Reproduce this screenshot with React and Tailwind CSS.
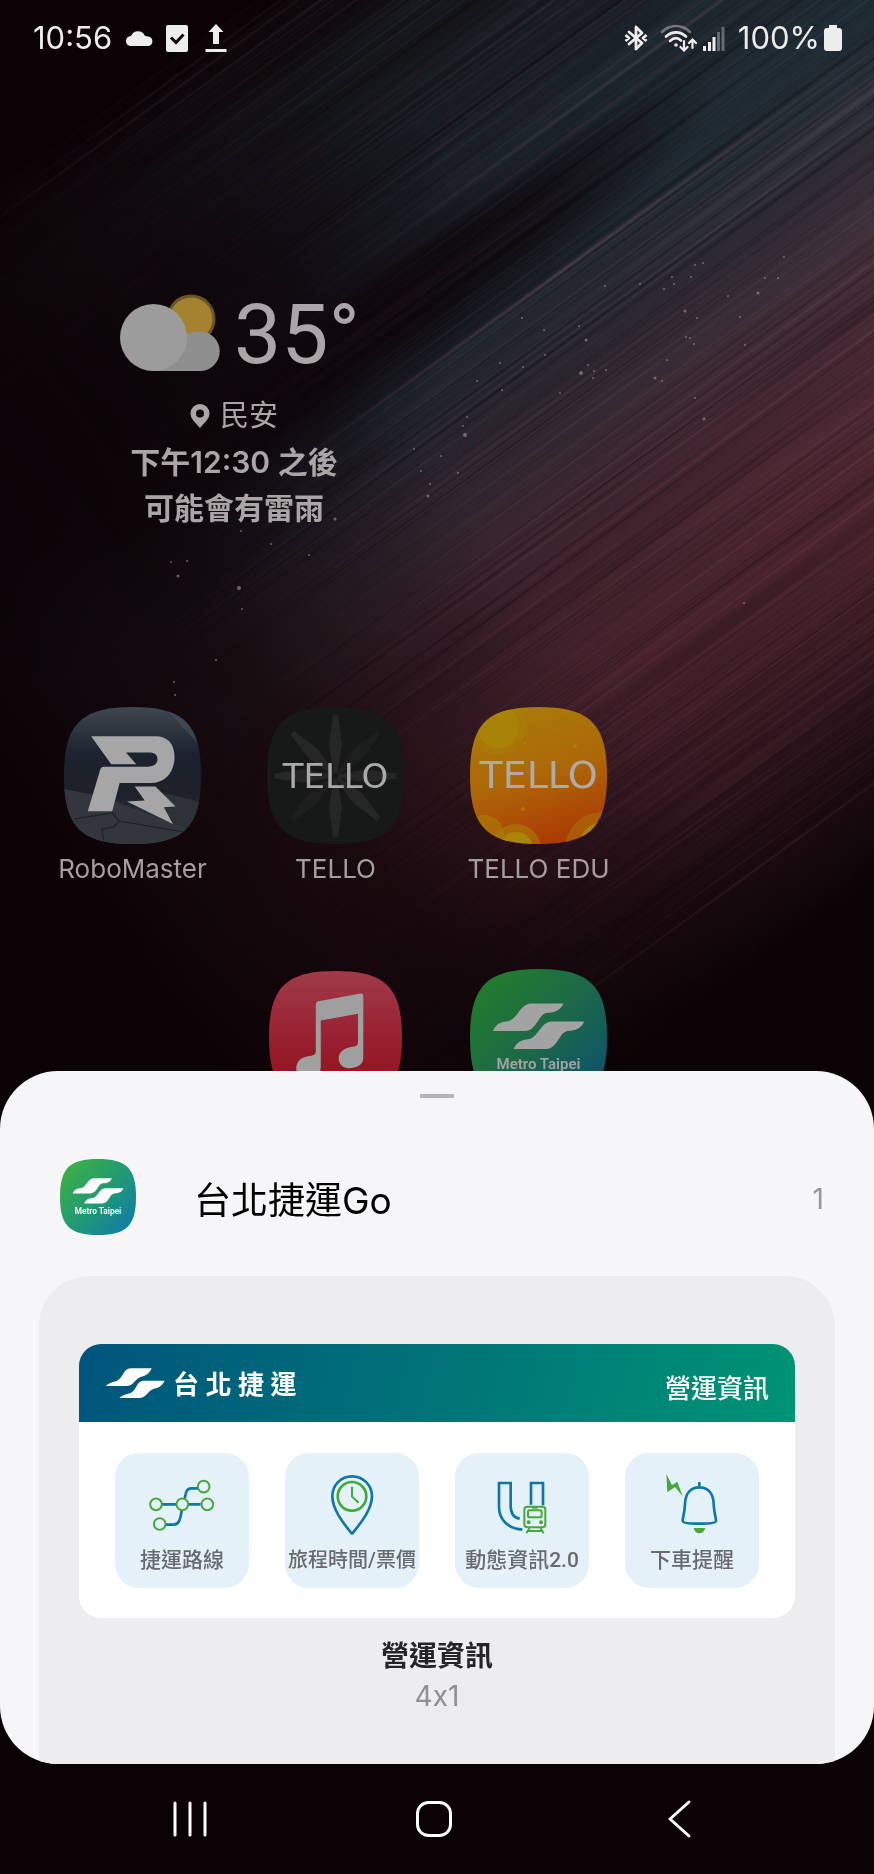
import { useId } from 'react';

const SQUIRCLE = 'M68.5 0C120 0 137 17 137 68.5S120 137 68.5 137 0 120 0 68.5 17 0 68.5 0Z';

// small seeded generator so the streaks are the same on every render
function makeRandom(seed) {
  let s = seed;
  return () => {
    s = (s * 16807) % 2147483647;
    return s / 2147483647;
  };
}

function makeStreaks() {
  const rand = makeRandom(4711);
  const streaks = [];
  for (let i = 0; i < 760; i++) {
    const v = 150 + rand() * 1000;
    const length = 350 + rand() * 900;
    const u = -560 + rand() * 900;
    const dark = rand() < 0.45;
    const wide = rand() > 0.9;
    let tone = 'rose';
    if (v < 560) tone = rand() < 0.2 ? 'rose' : 'teal';
    else if (v < 740) tone = 'pale';
    streaks.push({
      u,
      v,
      length,
      height: wide ? 4 + rand() * 12 : 1 + rand(),
      fill: dark ? 'dark' : tone,
      opacity: (dark ? 0.08 + rand() * 0.24 : 0.04 + rand() * 0.15) * (wide ? 0.6 : 1),
    });
  }
  return streaks;
}

const STREAKS = makeStreaks();

const SPARKS = [
  [605, 286, 1], [640, 284, 1], [672, 277, 1], [695, 265, 1], [703, 263, 1], [691, 277, 1],
  [674, 284, 1], [664, 289, 1], [784, 257, 1], [778, 278, 1], [765, 278, 1], [758, 293, 1.5],
  [728, 296, 1], [740, 317, 1], [685, 311, 1.5], [697, 318, 1], [686, 337, 1], [690, 338, 1],
  [694, 344, 1], [667, 360, 1], [655, 378, 1.5], [662, 381, 1], [745, 345, 1], [704, 419, 1.5],
  [695, 398, 1], [522, 318, 1], [544, 330, 1], [579, 326, 1], [586, 340, 1.5], [545, 355, 1],
  [523, 367, 1], [500, 363, 1], [477, 381, 1], [502, 390, 1], [560, 393, 1], [581, 373, 2],
  [588, 365, 1], [594, 371, 1], [606, 370, 1], [593, 378, 1], [467, 417, 1], [463, 426, 1],
  [465, 435, 2], [414, 449, 1], [421, 471, 1], [430, 484, 1], [428, 496, 1.5], [458, 473, 1],
  [441, 456, 1], [335, 519, 1.5], [241, 531, 1], [271, 544, 1], [309, 555, 1], [171, 562, 1],
  [187, 561, 1], [178, 576, 1.5], [239, 588, 2], [242, 609, 1], [216, 660, 1], [174, 682, 1],
  [175, 695, 1], [744, 603, 1],
];

function Wallpaper() {
  return (
    <svg
      className="absolute inset-x-0 top-0 w-full"
      viewBox="0 0 874 1110"
      preserveAspectRatio="xMidYMin slice"
      aria-hidden="true"
    >
      <defs>
        <linearGradient id="bands" gradientUnits="userSpaceOnUse" x1="0" y1="150" x2="0" y2="1230">
          <stop offset="0" stopColor="#0b0205" />
          <stop offset=".1" stopColor="#15171b" />
          <stop offset=".22" stopColor="#1c222a" />
          <stop offset=".35" stopColor="#1f2c35" />
          <stop offset=".43" stopColor="#2c2c36" />
          <stop offset=".51" stopColor="#41303a" />
          <stop offset=".6" stopColor="#4b2a36" />
          <stop offset=".7" stopColor="#532935" />
          <stop offset=".79" stopColor="#421e29" />
          <stop offset=".88" stopColor="#27121a" />
          <stop offset="1" stopColor="#0b0205" />
        </linearGradient>
        <linearGradient id="fade" gradientUnits="userSpaceOnUse" x1="-480" y1="0" x2="640" y2="0">
          <stop offset="0" stopColor="#fff" stopOpacity="0" />
          <stop offset=".25" stopColor="#fff" stopOpacity=".22" />
          <stop offset=".5" stopColor="#fff" stopOpacity=".78" />
          <stop offset="1" stopColor="#fff" stopOpacity="1" />
        </linearGradient>
        <mask id="reach" maskUnits="userSpaceOnUse" x="-900" y="0" width="1900" height="1500">
          <rect x="-900" width="1900" height="1500" fill="url(#fade)" />
        </mask>
        {[['rose', '#a2606e'], ['teal', '#4b6772'], ['pale', '#8b7480'], ['dark', '#0b0205']].map(([id, color]) => (
          <linearGradient id={id} key={id}>
            <stop offset="0" stopColor={color} stopOpacity="0" />
            <stop offset=".5" stopColor={color} />
            <stop offset="1" stopColor={color} stopOpacity="0" />
          </linearGradient>
        ))}
        <radialGradient id="hollow">
          <stop offset="0" stopColor="#0c060a" stopOpacity=".9" />
          <stop offset=".5" stopColor="#0c060a" stopOpacity=".7" />
          <stop offset="1" stopColor="#0c060a" stopOpacity="0" />
        </radialGradient>
      </defs>
      <g transform="rotate(-36)">
        <g mask="url(#reach)">
          <rect x="-900" y="150" width="1900" height="1080" fill="url(#bands)" />
          <ellipse cx="150" cy="490" rx="380" ry="65" fill="url(#hollow)" />
          {STREAKS.map((s, i) => (
            <rect key={i} x={s.u} y={s.v} width={s.length} height={s.height} fill={`url(#${s.fill})`} opacity={s.opacity} />
          ))}
          <ellipse cx="-130" cy="400" rx="400" ry="220" fill="url(#hollow)" />
          <rect x="-100" y="548" width="800" height="3" fill="url(#rose)" opacity=".35" />
        </g>
      </g>
      {SPARKS.map(([x, y, r]) => (
        <circle key={`${x}-${y}`} cx={x} cy={y} r={r} fill="#b08f98" opacity=".6" />
      ))}
    </svg>
  );
}

function StatusBar() {
  return (
    <header className="flex h-[76px] items-center justify-between pl-[33px] pr-8 font-[Inter,sans-serif] text-[31px] text-[#ededed]">
      <div className="flex items-center gap-[13px]">
        <time>10:56</time>
        <svg className="h-4 w-7" viewBox="0 0 28 16" fill="currentColor">
          <path d="M5 16A5 5 0 0 1 4 6.500 4 4 0 0 1 6 6 7.500 7.500 0 0 1 20 6 5 5 0 0 1 23 6.500 4.800 4.800 0 0 1 23.500 16Z" />
        </svg>
        <svg className="h-7 w-[22px]" viewBox="0 0 22 28">
          <rect y="1" width="22" height="27" rx="2" fill="currentColor" />
          <path d="M5 13.500l5 5 7.500-8" fill="none" stroke="#12080b" strokeWidth="3" />
        </svg>
        <svg className="ml-1 h-7 w-[22px]" viewBox="0 0 22 28" fill="currentColor">
          <path d="M11 0L18.500 8H14V20H8V8H3.500ZM.5 25H21.500V28H.5Z" />
        </svg>
      </div>
      <div className="flex items-center">
        <svg className="mr-3 h-7 w-6" viewBox="0 0 24 28" fill="none" stroke="currentColor" strokeWidth="2.800" strokeLinejoin="round">
          <path d="M5 8L18 19 12 25V3L18 9 5 20" strokeLinecap="round" />
          <path d="M1.500 11L5 14 1.500 17M22.500 11L19 14 22.500 17" />
        </svg>
        <svg className="mr-1 h-7 w-[38px]" viewBox="0 0 38 28" fill="none" stroke="currentColor" strokeWidth="2.600" strokeLinecap="round">
          <path d="M2 8C10 0 22 0 30 8" opacity=".4" />
          <path d="M6 12.500C12 7 20 7 26 12.500M10 17C14 13.500 18 13.500 21 16.500" />
          <circle cx="16" cy="21" r="1.800" fill="currentColor" stroke="none" />
          <path d="M24 17V26M20.500 23L24 26.500 27.500 23M32.500 24V16M29 19L32.500 15.500 36 19" strokeWidth="2.200" />
        </svg>
        <svg className="mr-3 h-7 w-6" viewBox="0 0 24 28" fill="currentColor">
          <path d="M1 22H4V27H1ZM6 18H9V27H6ZM10.500 13H13.500V27H10.500Z" />
          <path d="M15 8H18V27H15ZM19.500 3H22.500V27H19.500Z" opacity=".35" />
        </svg>
        <span>100%</span>
        <svg className="ml-1 h-7 w-[18px]" viewBox="0 0 18 28" fill="currentColor">
          <path d="M5 1H13V4H15Q18 4 18 7V24Q18 27 15 27H3Q0 27 0 24V7Q0 4 3 4H5Z" />
        </svg>
      </div>
    </header>
  );
}

function Weather() {
  return (
    <section className="col-span-2 flex flex-col items-center text-[#aaa5a7]">
      <div className="flex items-center gap-3.5 pl-3">
        <svg className="h-[78px] w-[100px]" viewBox="0 0 100 78">
          <circle cx="71" cy="25" r="24.500" fill="#6b5425" />
          <circle cx="71" cy="25" r="21.500" fill="#a58230" />
          <path d="M33 77V60L66 40Q72 37.500 80 37.500A19.700 19.700 0 0 1 80 77Z" fill="#8e8e8f" />
          <circle cx="33.500" cy="43.500" r="33.500" fill="#9c9c9d" />
        </svg>
        <span className="pt-1 text-[84px] leading-[84px]">35°</span>
      </div>
      <div className="mt-4 text-center font-[Inter,'Noto_Sans_CJK_TC',sans-serif] text-[30px] leading-[46px] font-semibold">
        <p className="flex items-center justify-center gap-2.5 text-[29px] font-normal">
          <svg className="h-6 w-5" viewBox="0 0 20 24" fill="currentColor">
            <path fillRule="evenodd" d="M10 0A9.500 9.500 0 0 1 19.500 9.500C19.500 15 14 19 10 24 6 19 .5 15 .5 9.500A9.500 9.500 0 0 1 10 0ZM10 5.500A4 4 0 1 0 10 13.500 4 4 0 1 0 10 5.500Z" />
          </svg>
          民安
        </p>
        <p>下午12:30 之後</p>
        <p>可能會有雷雨</p>
      </div>
    </section>
  );
}

function RoboMasterIcon() {
  return (
    <svg className="size-[137px]" viewBox="0 0 137 137" aria-hidden="true">
      <defs>
        <linearGradient id="robo" x1="0" y1="0" x2="0" y2="1">
          <stop offset="0" stopColor="#40464f" />
          <stop offset=".35" stopColor="#1c222e" />
          <stop offset=".65" stopColor="#1d2129" />
          <stop offset="1" stopColor="#41464d" />
        </linearGradient>
        <clipPath id="robo-clip"><path d={SQUIRCLE} /></clipPath>
      </defs>
      <g clipPath="url(#robo-clip)">
        <rect width="137" height="137" fill="url(#robo)" />
        <path d="M0 82L40 90 137 128V137H0Z" fill="#32373e" />
        <path d="M92 84L137 95V128L100 112Z" fill="#2d3239" />
        <path d="M10 112L48 106 55 114 50 120 38 122 40 137M55 114L137 128" fill="none" stroke="#1d2026" strokeWidth="1.200" />
        <path d="M100 0L137 40V30L110 0Z" fill="#4a4f58" opacity=".6" />
      </g>
      <g transform="scale(.335) translate(-72 -51)" fill="#a6a6a6">
        <path d="M153 138H345C382 138 402 162 402 200 402 246 374 278 330 278H238L216 362H143L180 238Q182 229 192 229H322C342 229 351 219 351 207 351 194 343 187 325 187H257L288 222H213Z" />
        <path d="M283 288H345L405 348 370 350 397 400 260 333 313 330Z" />
      </g>
    </svg>
  );
}

function TelloIcon() {
  return (
    <svg className="size-[137px]" viewBox="0 0 137 137">
      <path d={SQUIRCLE} fill="#171818" />
      {[0, 45, 90, 135, 180, 225, 270, 315].map((angle) => (
        <path
          key={angle}
          d="M66 8H71L75 38 70 66H67L62 38Z"
          fill={angle === 45 || angle === 225 ? '#1e1e1e' : '#262626'}
          transform={`rotate(${angle} 68.500 69)`}
        />
      ))}
      <text x="68.500" y="81" textAnchor="middle" fontSize="34" fontFamily="DejaVu Sans, sans-serif" fill="#aaa">TELLO</text>
    </svg>
  );
}

function TelloEduIcon() {
  return (
    <svg className="size-[137px]" viewBox="0 0 137 137">
      <defs>
        <linearGradient id="edu" x1=".3" y1="0" x2=".6" y2="1">
          <stop offset="0" stopColor="#a87c08" />
          <stop offset=".5" stopColor="#ad6808" />
          <stop offset="1" stopColor="#ac3a04" />
        </linearGradient>
        <clipPath id="edu-clip"><path d={SQUIRCLE} /></clipPath>
      </defs>
      <g clipPath="url(#edu-clip)">
        <rect width="137" height="137" fill="url(#edu)" />
        <g fill="#a98608">
          <circle cx="28" cy="20" r="28" opacity=".25" />
          <circle cx="28" cy="20" r="21" opacity=".7" />
          <circle cx="14" cy="128" r="20" opacity=".5" />
          <circle cx="46" cy="142" r="25" opacity=".5" />
          <circle cx="46" cy="142" r="17" />
          <circle cx="132" cy="142" r="37" opacity=".4" />
          <circle cx="136" cy="142" r="28" />
          <circle cx="53" cy="102" r="2" opacity=".7" />
          <circle cx="55" cy="36" r="1.500" opacity=".7" />
          <circle cx="105" cy="39" r="2" opacity=".7" />
        </g>
      </g>
      <text x="68.500" y="81" textAnchor="middle" fontSize="38" fontFamily="DejaVu Sans, sans-serif" fill="#b0aaa6">TELLO</text>
    </svg>
  );
}

function MusicIcon() {
  return (
    <svg className="size-[133px]" viewBox="0 0 137 137" aria-label="Music">
      <defs>
        <linearGradient id="music" x1="0" y1="0" x2="0" y2="1">
          <stop offset="0" stopColor="#a03a49" />
          <stop offset=".8" stopColor="#941321" />
        </linearGradient>
      </defs>
      <path d={SQUIRCLE} fill="url(#music)" />
      <path
        transform="scale(.342) translate(-87 -63)"
        fill="#9f9f9f"
        d="M228 163Q228 156 236 154L362 131Q371 130 371 140V325C371 345 350 356 328 356 310 356 297 345 297 326 297 305 315 296 335 292Q355 290 355 280V192L243 212V352C243 372 225 384 205 384 185 384 169 374 169 357 169 335 185 322 205 320Q228 317 228 306Z"
      />
    </svg>
  );
}

function MetroIcon({ className, dim = false }) {
  const id = useId();
  const colors = dim ? ['#237d2c', '#1c6848', '#0c5070'] : ['#3eb044', '#219a72', '#0e7bab'];
  const ink = dim ? '#a3a3a3' : '#fff';

  return (
    <svg className={className} viewBox="0 0 137 137" aria-label="Metro Taipei">
      <defs>
        <linearGradient id={id} x1=".05" y1=".1" x2=".95" y2=".95">
          <stop offset="0" stopColor={colors[0]} />
          <stop offset=".5" stopColor={colors[1]} />
          <stop offset="1" stopColor={colors[2]} />
        </linearGradient>
      </defs>
      <path d={SQUIRCLE} fill={`url(#${id})`} />
      <g transform="scale(.335) translate(-151 -837)" fill={ink}>
        <path d="M219 1022C230 1000 243 995 264 993 292 988 300 942 332 940H430C420 962 405 967 380 968 354 972 352 1020 316 1022Z" />
        <path d="M281 1076C292 1054 305 1049 326 1047 354 1042 362 996 394 994H492C482 1016 467 1021 442 1022 416 1026 414 1074 378 1076Z" />
      </g>
      <text x="68.500" y="100" textAnchor="middle" fontSize="15" fontWeight="600" fill={ink}>Metro Taipei</text>
    </svg>
  );
}

function AppShortcut({ icon, label }) {
  return (
    <button type="button" className="flex flex-col items-center gap-[9px]">
      {icon}
      <span className="font-[Inter,sans-serif] text-[26px] leading-8 whitespace-nowrap text-[#a59fa1]">{label}</span>
    </button>
  );
}

function RouteIcon() {
  return (
    <svg className="h-[63px] w-[68px]" viewBox="236 430 204 189" fill="none" strokeWidth="8">
      <path d="M278 521H320M357 521H394M346 504C350 484 352 473 366 473H386M337 540C333 566 329 582 314 582H290" stroke="#0e76a8" />
      <g stroke="#46a83a" strokeWidth="6">
        <circle cx="260" cy="521" r="17.500" />
        <circle cx="339" cy="521" r="17.500" />
        <circle cx="414" cy="521" r="17.500" />
        <circle cx="403" cy="468" r="17.500" />
        <circle cx="271" cy="580" r="17.500" />
      </g>
    </svg>
  );
}

function PinClockIcon() {
  return (
    <svg className="h-[63px] w-[68px]" viewBox="745 430 204 189" fill="none" strokeWidth="8">
      <path d="M847 437C880 437 907 463 907 497 907 535 875 575 850 606Q847 610 844 606C819 575 788 535 788 497 788 463 814 437 847 437Z" stroke="#0e76a8" />
      <circle cx="847" cy="497" r="43" stroke="#46a83a" />
      <path d="M847 468V498L867 516" stroke="#46a83a" strokeWidth="6" />
    </svg>
  );
}

function TrainIcon() {
  return (
    <svg className="h-[63px] w-[68px]" viewBox="175 430 204 189" fill="none" strokeWidth="8">
      <path d="M278 597C236 594 208 567 208 530V457H243V525C243 548 252 561 270 564M304 522V457H340V524" stroke="#0e76a8" />
      <g stroke="#46a83a" strokeWidth="6">
        <rect x="284" y="528" width="63" height="62" rx="9" />
        <rect x="295" y="539" width="41" height="21" rx="5" />
        <path d="M290 608L300 592M342 608L332 592M292 601H340M308 531H324" />
        <circle cx="297" cy="575" r="3" fill="#46a83a" />
        <circle cx="334" cy="575" r="3" fill="#46a83a" />
      </g>
    </svg>
  );
}

function BellIcon() {
  return (
    <svg className="h-[63px] w-[68px]" viewBox="683 430 204 189">
      <path d="M708 430L725 464 741 453 757 497 734 469 711 485Z" fill="#46a83a" />
      <path d="M807 457V470M807 470C834 470 849 490 850 520 851 548 857 560 857 570Q857 579 807 579 757 579 757 570C757 560 763 548 764 520 765 490 780 470 807 470Z" fill="none" stroke="#0e76a8" strokeWidth="8" strokeLinecap="round" />
      <path d="M790 592H825Q820 608 807 608 794 608 790 592Z" fill="#46a83a" />
    </svg>
  );
}

const services = [
  { label: '捷運路線', icon: <RouteIcon />, size: 'text-[21px]' },
  { label: '旅程時間/票價', icon: <PinClockIcon />, size: 'text-[20px]' },
  { label: '動態資訊2.0', icon: <TrainIcon />, size: 'text-[21px]' },
  { label: '下車提醒', icon: <BellIcon />, size: 'text-[21px]' },
];

function MetroWidget() {
  return (
    <article className="overflow-hidden rounded-[22px] bg-white">
      <header className="flex h-[78px] items-center justify-between bg-linear-[105deg] from-[#00547c] to-[#009474] px-[26px] text-white">
        <div className="flex items-center gap-2">
          <svg className="h-8 w-[60px]" viewBox="105 108 180 96" fill="#fff" aria-hidden="true">
            <path d="M107 165C118 155 128 154 140 150 160 142 160 112 182 112H245C236 132 226 134 212 138 194 144 192 165 168 165Z" />
            <path d="M148 201C158 192 168 191 180 187 200 179 200 149 220 149H284C275 168 264 170 250 174 232 180 230 201 206 201Z" />
          </svg>
          <span className="pt-1 text-[26px] leading-8 font-bold">台 北 捷 運</span>
        </div>
        <span className="pt-3 text-[26px] leading-8 font-medium">營運資訊</span>
      </header>
      <div className="grid grid-cols-4 gap-9 px-9 pt-[31px] pb-[30px]">
        {services.map((service) => (
          <button
            type="button"
            key={service.label}
            className="flex flex-col items-center rounded-3xl bg-[#e5f1f8] pt-[21px] pb-4 text-[#696a6c]"
          >
            {service.icon}
            <span className={`mt-[11px] leading-6 font-medium whitespace-nowrap ${service.size}`}>{service.label}</span>
          </button>
        ))}
      </div>
    </article>
  );
}

function WidgetSheet() {
  return (
    <section className="relative z-10 -mt-[35px] overflow-hidden rounded-[58px] bg-[#f6f6f8] pt-[23px] font-[Inter,'Noto_Sans_CJK_TC',sans-serif]">
      <div className="mx-auto h-1 w-[34px] bg-[#b5b5b7]" />
      <div className="mt-[61px] flex items-center pl-[60px] pr-[50px]">
        <MetroIcon className="size-[76px] font-[Roboto,sans-serif]" />
        <h1 className="ml-[58px] flex-1 pt-2 text-[37px] leading-10 text-black">台北捷運Go</h1>
        <span className="pt-1 text-[28px] leading-10 text-[#97979a]">1</span>
      </div>
      <div className="mx-[39px] mt-[41px] rounded-t-[50px] bg-[#ededef] px-10 pt-[68px] pb-12 text-center">
        <div className="font-[Roboto,'Noto_Sans_CJK_TC',sans-serif]">
          <MetroWidget />
        </div>
        <h2 className="mt-[18px] text-[28px] leading-10 font-bold text-[#252527]">營運資訊</h2>
        <p className="text-[28px] leading-10 text-[#8f8f91] [font-feature-settings:'calt'_0]">4x1</p>
      </div>
    </section>
  );
}

function NavigationBar() {
  return (
    <nav className="flex h-[109px] items-center pl-[68px] pr-[74px]">
      <button type="button" aria-label="Recents" className="flex flex-1 justify-center">
        <svg className="size-10" viewBox="0 0 40 40" stroke="#fff" strokeWidth="3" strokeLinecap="round">
          <path d="M5 4V36M20 4V36M35 4V36" />
        </svg>
      </button>
      <button type="button" aria-label="Home" className="flex flex-1 justify-center">
        <svg className="size-10" viewBox="0 0 40 40" fill="none" stroke="#fff" strokeWidth="3">
          <rect x="3.500" y="3.500" width="33" height="33" rx="11" />
        </svg>
      </button>
      <button type="button" aria-label="Back" className="flex flex-1 justify-center">
        <svg className="size-10" viewBox="0 0 40 40" fill="none" stroke="#fff" strokeWidth="3" strokeLinecap="round" strokeLinejoin="round">
          <path d="M31 3L12 20 31 37" />
        </svg>
      </button>
    </nav>
  );
}

export default function App() {
  return (
    <div className="relative min-h-screen overflow-hidden bg-[#0b0205] font-[Roboto,'Noto_Sans_CJK_TC',sans-serif]">
      <Wallpaper />
      <div className="relative">
        <StatusBar />
        <main>
          <div className="px-[31px] pt-[213px]">
            <div className="grid grid-cols-4">
              <Weather />
            </div>
            <div className="mt-44 grid grid-cols-4">
              <AppShortcut icon={<RoboMasterIcon />} label="RoboMaster" />
              <AppShortcut icon={<TelloIcon />} label="TELLO" />
              <AppShortcut icon={<TelloEduIcon />} label="TELLO EDU" />
            </div>
            <div className="mt-[84px] grid grid-cols-4 items-center justify-items-center">
              <button type="button" className="col-start-2">
                <MusicIcon />
              </button>
              <button type="button">
                <MetroIcon className="size-[137px]" dim />
              </button>
            </div>
          </div>
          <WidgetSheet />
        </main>
        <NavigationBar />
      </div>
    </div>
  );
}
